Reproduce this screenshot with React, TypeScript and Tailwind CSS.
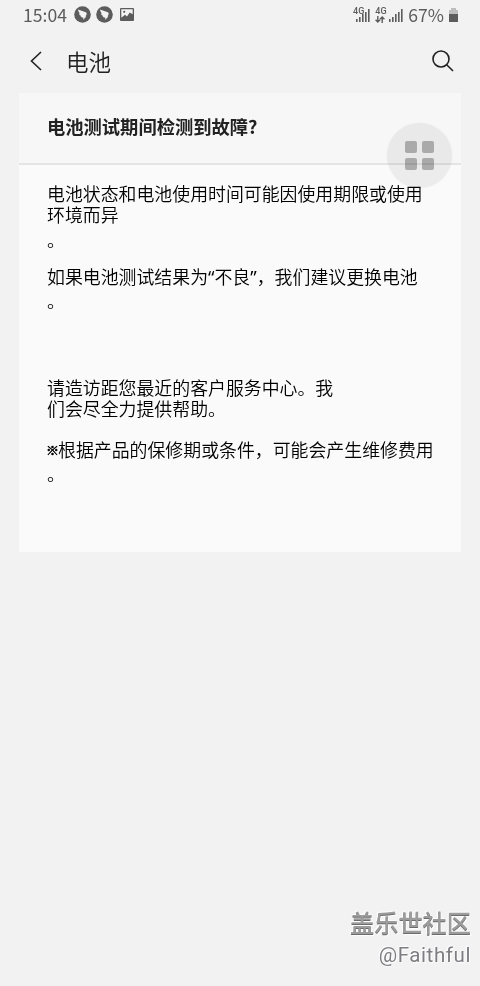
import React from 'react';

const SignalBars: React.FC = () => (
  <svg width="14" height="13" viewBox="0 0 14 13" fill="#5c5c5c">
    <rect x="0" y="10" width="1.6" height="3" />
    <rect x="3" y="8" width="1.6" height="5" />
    <rect x="6" y="5" width="1.6" height="8" />
    <rect x="9" y="3" width="1.6" height="10" />
    <rect x="12" y="0" width="1.6" height="13" />
  </svg>
);

const BirdIcon: React.FC = () => (
  <svg width="17" height="17" viewBox="0 0 17 17">
    <circle cx="8.5" cy="8.5" r="8.3" fill="#5c5c5c" />
    <path d="M4 3.6 L11.8 6.2 Q13.2 7 12.6 8.5 L11.4 10.4 H12.4 L9 14 L9.4 11.7 Q7 11.4 6.4 10.2 H7.4 Q5.2 9.2 4.8 7.4 L6 7.4 Q4.2 5.8 4 3.6Z" fill="#f2f2f2" />
  </svg>
);

const StatusBar: React.FC = () => (
  <div className="flex h-[29px] items-center justify-between pr-[22px] pl-[23px] text-[17.6px] text-[#5c5c5c]">
    <div className="flex items-center">
      <span className="w-[51px] leading-[27px]">15:04</span>
      <BirdIcon />
      <span className="w-[5px]" />
      <BirdIcon />
      <svg className="ml-[7px]" width="14" height="13" viewBox="0 0 14 13">
        <rect width="14" height="13" rx="1" fill="#5c5c5c" />
        <path d="M1.3 1.3H12.7V6.3L9.7 4.6L7 8.4L5 6.8L1.3 9.7Z" fill="#f2f2f2" />
        <circle cx="4.2" cy="3.8" r="1.1" fill="#5c5c5c" />
      </svg>
    </div>
    <div className="flex items-center">
      <div className="flex h-[14px]">
        <span className="-mt-px font-['Roboto',sans-serif] text-[9px] leading-[9px] font-medium">4G</span>
        <span className="mt-px -ml-[8px]"><SignalBars /></span>
      </div>
      <div className="ml-[5px] h-[14px] w-[11px]">
        <p className="-mt-px font-['Roboto',sans-serif] text-[9px] leading-[9px] font-medium">4G</p>
        <svg width="10" height="7" viewBox="0 0 10 7" fill="none" stroke="#5c5c5c" strokeWidth="1.4">
          <path d="M2.8 0V6M0.6 3.8L2.8 6L5 3.8M7.2 7V1M5 3.2L7.2 1L9.4 3.2" />
        </svg>
      </div>
      <span className="mt-px ml-[3px]"><SignalBars /></span>
      <span className="ml-[5px] leading-[27px]">67%</span>
      <svg className="ml-[5px]" width="9" height="14" viewBox="0 0 9 14">
        <path d="M2 0H7V2H9V6H0V2H2Z" fill="#bdbdbd" />
        <rect y="6" width="9" height="8" fill="#5c5c5c" />
      </svg>
    </div>
  </div>
);

const TitleBar: React.FC = () => (
  <header className="flex h-[64px] items-center pr-[26px] pl-[30px] text-[#222]">
    <svg width="12" height="20" viewBox="0 0 12 20" fill="none" stroke="currentColor" strokeWidth="1.6">
      <path d="M11 1L1.5 10L11 19" />
    </svg>
    <h1 className="ml-[24px] text-[22.5px] leading-[32px] font-[350]">电池</h1>
    <svg className="ml-auto" width="22" height="22" viewBox="0 0 22 22" fill="none" stroke="currentColor" strokeWidth="1.6">
      <circle cx="9" cy="9" r="8" />
      <path d="M14.7 14.7L21 21" />
    </svg>
  </header>
);

// mix-blend keeps the text and divider under the button visible
const FloatingButton: React.FC = () => (
  <div className="absolute top-[122px] left-[386px] flex size-[67px] items-center justify-center rounded-full border border-black/2 bg-[#f1f1f1] bg-clip-padding mix-blend-multiply">
    <div className="grid grid-cols-2 gap-[5px]">
      <i className="size-[12px] rounded-[2px] bg-[#b0b0b0]" />
      <i className="size-[12px] rounded-[2px] bg-[#b0b0b0]" />
      <i className="size-[12px] rounded-[2px] bg-[#b0b0b0]" />
      <i className="size-[12px] rounded-[2px] bg-[#b0b0b0]" />
    </div>
  </div>
);

const Quote: React.FC<{ children: string }> = ({ children }) => (
  <span className="font-['Noto_Sans',sans-serif] leading-none font-normal">{children}</span>
);

const App: React.FC = () => (
  <div className="relative flex h-[986px] w-[480px] flex-col bg-[#f2f2f2] font-['Noto_Sans_CJK_SC',sans-serif]">
    <StatusBar />
    <TitleBar />
    <main className="px-[19px]">
      <section className="h-[459px] bg-[#fafafa]">
        <h2 className="h-[72px] border-b-2 border-[#e4e4e4] bg-[#f7f7f7] pl-7 text-[18.3px] leading-[67px] font-bold text-[#222]">电池测试期间检测到故障?</h2>
        <div className="px-7 pt-[18px] text-[17.9px] leading-[21.3px] font-[350] whitespace-nowrap text-black">
          <p>电池状态和电池使用时间可能因使用期限或使用<br />环境而异</p>
          <p className="mt-[3px] h-[21px]">。</p>
          <p className="mt-[16px] h-[21px]">如果电池测试结果为<Quote>“</Quote>不良<Quote>”</Quote>，我们建议更换电池</p>
          <p className="mt-[3px] h-[21px]">。</p>
          <p className="mt-[66px]">请造访距您最近的客户服务中心。我<br />们会尽全力提供帮助。</p>
          <p className="mt-[20px] flex"><span className="w-[11px] text-[13px] [-webkit-text-stroke:0.5px_#000]"><span className="-ml-px">※</span></span>根据产品的保修期或条件，可能会产生维修费用</p>
          <p className="mt-[3px] h-[21px]">。</p>
        </div>
      </section>
    </main>
    <FloatingButton />
    <footer className="mt-auto flex flex-col items-end pr-[9px] pb-[18px] [text-shadow:-1px_-1px_1px_#fff,1px_1px_1px_#fff]">
      <p className="mb-[4px] text-[24.2px] leading-[33px] font-medium text-[#9c9c9c] [text-shadow:0_1px_0_#6c6c6c,-1px_-1px_1px_#fff,1px_2px_1px_#fff]">盖乐世社区</p>
      <p className="font-['Roboto',sans-serif] text-[20.5px] leading-[26px] tracking-[0.6px] text-[#7d7d82]">@Faithful</p>
    </footer>
  </div>
);

export default App;
